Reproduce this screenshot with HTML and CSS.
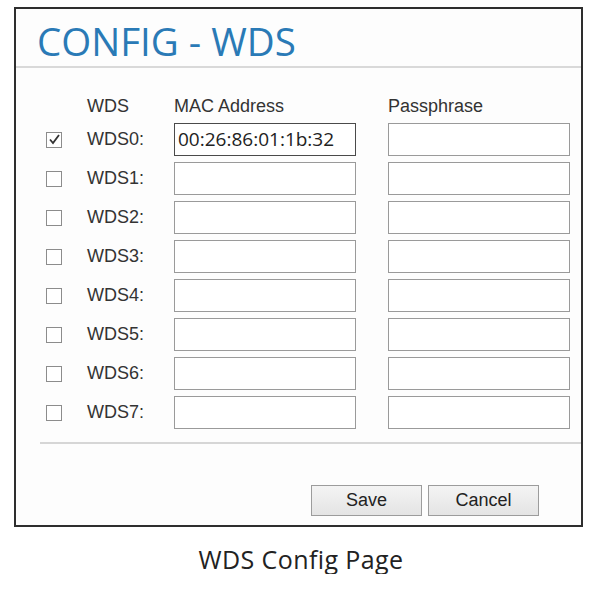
FILE: index.html
```html
<!DOCTYPE html>
<html>
<head>
<meta charset="utf-8">
<link rel="stylesheet" href="styles.css">
</head>
<body>
<div class="frame">
  <div class="header"><h1 class="title">CONFIG - WDS</h1></div>
  <div class="grid">
    <div></div>
    <div class="colhead">WDS</div>
    <div class="colhead">MAC Address</div>
    <div class="colhead">Passphrase</div>

    <div class="cell"><span class="cb checked"><svg width="13" height="13" viewBox="0 0 13 13"><path d="M2 6.5 L5 10 L11 2" fill="none" stroke="#333" stroke-width="1.8"/></svg></span></div>
    <div class="cell label">WDS0:</div>
    <div class="cell"><div class="inp dark">00:26:86:01:1b:32</div></div>
    <div class="cell"><div class="inp"></div></div>

    <div class="cell"><span class="cb"></span></div>
    <div class="cell label">WDS1:</div>
    <div class="cell"><div class="inp"></div></div>
    <div class="cell"><div class="inp"></div></div>

    <div class="cell"><span class="cb"></span></div>
    <div class="cell label">WDS2:</div>
    <div class="cell"><div class="inp"></div></div>
    <div class="cell"><div class="inp"></div></div>

    <div class="cell"><span class="cb"></span></div>
    <div class="cell label">WDS3:</div>
    <div class="cell"><div class="inp"></div></div>
    <div class="cell"><div class="inp"></div></div>

    <div class="cell"><span class="cb"></span></div>
    <div class="cell label">WDS4:</div>
    <div class="cell"><div class="inp"></div></div>
    <div class="cell"><div class="inp"></div></div>

    <div class="cell"><span class="cb"></span></div>
    <div class="cell label">WDS5:</div>
    <div class="cell"><div class="inp"></div></div>
    <div class="cell"><div class="inp"></div></div>

    <div class="cell"><span class="cb"></span></div>
    <div class="cell label">WDS6:</div>
    <div class="cell"><div class="inp"></div></div>
    <div class="cell"><div class="inp"></div></div>

    <div class="cell"><span class="cb"></span></div>
    <div class="cell label">WDS7:</div>
    <div class="cell"><div class="inp"></div></div>
    <div class="cell"><div class="inp"></div></div>
  </div>
  <div class="sep"></div>
  <div class="buttons">
    <div class="btn">Save</div>
    <div class="btn">Cancel</div>
  </div>
</div>
<div class="caption">WDS Config Page</div>
</body>
</html>
```
FILE: styles.css
```css
html, body { margin: 0; padding: 0; background: #fff; }
body { font-family: "Liberation Sans", Arial, sans-serif; }
.frame {
  margin: 7px 0 0 14px;
  width: 565px;
  height: 516px;
  border: 2px solid #2e2e2e;
  background: #fdfdfd;
  display: flex;
  flex-direction: column;
}
.header {
  height: 57px;
  border-bottom: 2px solid #d9d9d9;
  display: flex;
  align-items: flex-start;
}
.title {
  margin: 9px 0 0 21px;
  font-family: "Open Sans", sans-serif;
  font-weight: 400;
  font-size: 38.5px;
  line-height: 46px;
  color: #2a7ab6;
}
.grid {
  display: grid;
  grid-template-columns: 41px 87px 214px 182px;
  padding-left: 30px;
  padding-top: 28px;
  grid-auto-rows: 39px;
  grid-template-rows: 24px;
}
.colhead {
  font-size: 18px;
  line-height: 21px;
  color: #333;
}
.cell { display: flex; align-items: center; }
.label { font-size: 18px; color: #333; }
.cb {
  width: 14px;
  height: 14px;
  border: 1px solid #8c8c8c;
  background: #fff;
  display: flex;
  align-items: center;
  justify-content: center;
}
.inp {
  box-sizing: border-box;
  width: 182px;
  height: 33px;
  border: 1px solid #9a9a9a;
  background: #fff;
  font-family: "Open Sans", sans-serif;
  font-size: 19px;
  line-height: 31px;
  padding-left: 3px;
  color: #222;
}
.inp.dark { border-color: #4a4a4a; }
.sep {
  margin: 10px 0 0 24px;
  height: 2px;
  background: #d6d6d6;
}
.buttons {
  display: flex;
  justify-content: flex-end;
  gap: 6px;
  margin: 41px 42px 0 0;
}
.btn {
  box-sizing: border-box;
  width: 111px;
  height: 31px;
  border: 1px solid #9c9c9c;
  background: linear-gradient(#f4f4f4, #e4e4e4);
  font-size: 18px;
  line-height: 29px;
  text-align: center;
  color: #222;
}
.caption {
  margin-top: 17px;
  text-align: center;
  font-family: "Open Sans", sans-serif;
  font-size: 25px;
  letter-spacing: 0.4px;
  line-height: 30px;
  color: #222;
}
```
